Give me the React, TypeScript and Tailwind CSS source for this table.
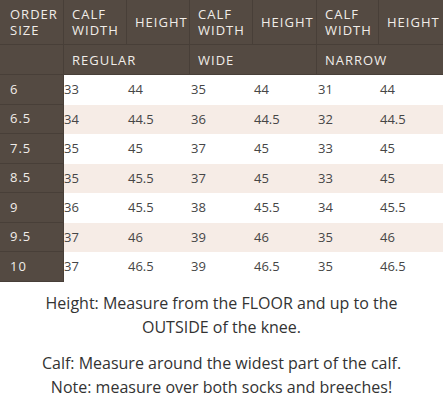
const rows = [
  ["6", "33", "44", "35", "44", "31", "44"],
  ["6.5", "34", "44.5", "36", "44.5", "32", "44.5"],
  ["7.5", "35", "45", "37", "45", "33", "45"],
  ["8.5", "35", "45.5", "37", "45", "33", "45"],
  ["9", "36", "45.5", "38", "45.5", "34", "45.5"],
  ["9.5", "37", "46", "39", "46", "35", "46"],
  ["10", "37", "46.5", "39", "46.5", "35", "46.5"],
];

const cols = "grid grid-cols-[64px_63px_63px_63px_64px_62px_64px]";

const HeadCell = ({ lines, last, first }: { lines: string[]; last?: boolean; first?: boolean }) => (
  <div
    className={`h-[45px] flex items-center border-b border-[#483f38] ${first ? "pl-[10px]" : "pl-[8px]"} ${last ? "" : "border-r"}`}
  >
    <div>
      {lines.map((l) => (
        <div key={l}>{l}</div>
      ))}
    </div>
  </div>
);

export default function App() {
  return (
    <div className="w-[443px] h-[407px] bg-white overflow-hidden font-['Open_Sans',sans-serif]">
      {/* header */}
      <div className={`${cols} bg-[#544a42] text-[13px] leading-[16px] tracking-[1px] text-[#f1ede9]`}>
        <HeadCell first lines={["ORDER", "SIZE"]} />
        <HeadCell lines={["CALF", "WIDTH"]} />
        <HeadCell lines={["HEIGHT"]} />
        <HeadCell lines={["CALF", "WIDTH"]} />
        <HeadCell lines={["HEIGHT"]} />
        <HeadCell lines={["CALF", "WIDTH"]} />
        <HeadCell last lines={["HEIGHT"]} />

        <div className="h-[30px] border-r border-b border-[#483f38]" />
        <div className="col-span-2 h-[30px] flex items-center pl-[8px] border-r border-b border-[#483f38]">REGULAR</div>
        <div className="col-span-2 h-[30px] flex items-center pl-[8px] border-r border-b border-[#483f38]">WIDE</div>
        <div className="col-span-2 h-[30px] flex items-center pl-[8px] border-b border-[#483f38]">NARROW</div>
      </div>

      {/* body */}
      {rows.map((r, i) => (
        <div
          key={r[0]}
          className={`${cols} h-[29.5px] text-[13px] text-[#464646] ${i % 2 === 1 ? "bg-[#f6ece6]" : "bg-white"}`}
        >
          {r.map((v, j) =>
            j === 0 ? (
              <div
                key={j}
                className="bg-[#544a42] text-[#f1ede9] tracking-[1px] flex items-center pl-[10px] border-r border-b border-[#483f38]"
              >
                {v}
              </div>
            ) : (
              <div key={j} className={`flex items-center ${j === 1 ? "pl-0" : "pl-[1px]"}`}>
                {v}
              </div>
            )
          )}
        </div>
      ))}

      {/* notes */}
      <div className="text-center text-[16px] leading-[24px] text-[#333333] mt-[9px]">
        <p>
          Height: Measure from the FLOOR and up to the
          <br />
          OUTSIDE of the knee.
        </p>
        <p className="mt-[12px]">
          Calf: Measure around the widest part of the calf.
          <br />
          Note: measure over both socks and breeches!
        </p>
      </div>
    </div>
  );
}
